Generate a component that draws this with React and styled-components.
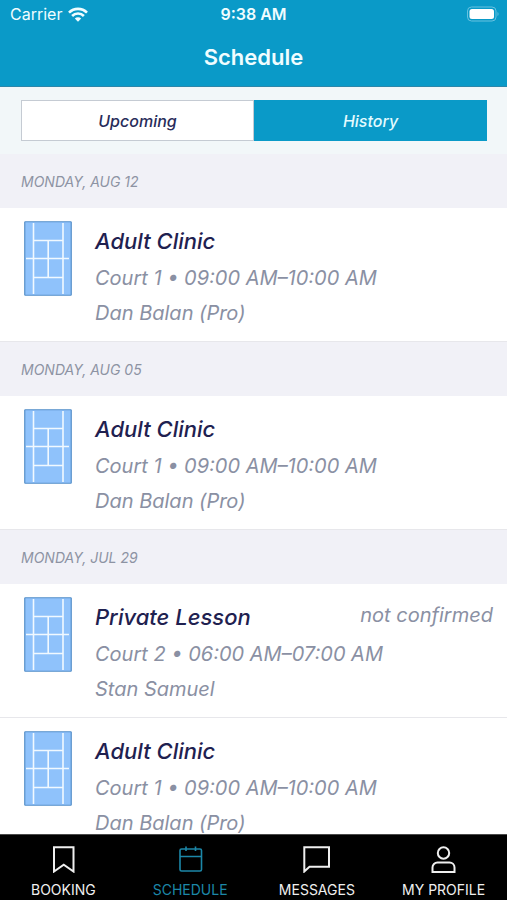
import React, { useState } from "react";
import styled, { createGlobalStyle } from "styled-components";

const GlobalStyle = createGlobalStyle`
  * { box-sizing: border-box; }
  body { margin: 0; background: #fff; }
  button { font: inherit; border: 0; margin: 0; padding: 0; cursor: pointer; }
`;

const ui = `Inter, "Liberation Sans", sans-serif`;

const Screen = styled.div`
  display: flex;
  flex-direction: column;
  height: 100vh;
  overflow: hidden;
  font-family: ${ui};
`;

const Header = styled.header`
  flex: none;
  background: #0a9ac8;
  border-bottom: 1px solid #2c87aa;
  color: #f0fdff;
`;

const StatusBar = styled.div`
  display: grid;
  grid-template-columns: 1fr auto 1fr;
  align-items: center;
  height: 28px;
  padding: 0 8px;
  font-size: 16px;
  line-height: 28px;
`;

const Carrier = styled.div`
  display: flex;
  align-items: center;
  gap: 6px;
  padding-left: 2px;
`;

const Clock = styled.div`
  font-weight: 600;
`;

const BatteryIcon = styled.svg`
  justify-self: end;
`;

const Title = styled.h1`
  margin: 0;
  height: 58px;
  font-size: 22px;
  font-weight: 600;
  line-height: 58px;
  text-align: center;
`;

const Segments = styled.div`
  flex: none;
  display: grid;
  grid-template-columns: 1fr 1fr;
  padding: 13px 20px 13px 21px;
  background: #f2f7f9;
`;

const Segment = styled.button`
  && {
    height: 41px;
    border: ${(p) => (p.$active ? "0" : "1px solid #c5cbd3")};
    background: ${(p) => (p.$active ? "#0a9ac8" : "#fff")};
    color: ${(p) => (p.$active ? "#e4fbff" : "#282c5a")};
    font-size: 16px;
    font-style: italic;
    font-weight: 500;
  }
`;

const List = styled.main`
  flex: 1;
  min-height: 0;
  overflow-y: auto;
  scrollbar-width: none;
  font-style: italic;
`;

const DayHeading = styled.h2`
  margin: 0;
  padding: 2px 21px 0;
  background: #f1f1f7;
  color: #8d93a3;
  font-size: 14px;
  font-weight: 400;
  line-height: 52px;
`;

const Entry = styled.article`
  display: flex;
  align-items: flex-start;
  gap: 23px;
  height: 134px;
  padding: 13px 14px 0 24px;
  border-bottom: 1px solid #e7e7eb;
  background: #fff;
`;

const Details = styled.div`
  flex: 1;
  padding-top: 1px;
  color: #8a90a3;
  font-size: 20px;
  line-height: 35px;
  white-space: nowrap;
`;

const TopLine = styled.div`
  display: flex;
  justify-content: space-between;
  line-height: 39px;
`;

const EntryName = styled.h3`
  margin: 0;
  color: #1f2150;
  font-size: 22px;
  font-weight: 500;
`;

const Note = styled.span`
  line-height: 35px;
`;

const Line = styled.p`
  margin: 0;
`;

const TabBar = styled.nav`
  flex: none;
  display: flex;
  height: 66px;
  border-top: 1px solid #4a4a4a;
  background: #000;
`;

const Tab = styled.button`
  && {
    flex: 1 1 0;
    min-width: 0;
    display: flex;
    flex-direction: column;
    align-items: center;
    gap: 8px;
    padding-top: 11px;
    background: none;
    color: ${(p) => (p.$active ? "#1c87a8" : "#efefef")};
    font-size: 14px;
    font-weight: 400;
    line-height: 18px;
  }
`;

const Court = () => (
  <svg width="48" height="75" viewBox="0 0 48 75" fill="none" aria-hidden="true">
    <rect x="0.75" y="0.75" width="46.5" height="73.5" rx="0.5" fill="#8fc2fb" stroke="#5790c9" strokeWidth="1.2" />
    <path d="M9.5 2v71M39 2v71M9.5 19.5H39M9.5 56.5H39M24.2 19.5v37M2 37.5h43" stroke="#f1f9ff" strokeWidth="1.6" />
  </svg>
);

const Wifi = () => (
  <svg width="20" height="15" viewBox="0 0 20 15" fill="none" aria-hidden="true">
    <path d="M1 5.6a12.7 12.7 0 0 1 18 0M4.1 9a8.3 8.3 0 0 1 11.8 0" stroke="#f0fdff" strokeWidth="2.6" />
    <path d="M6.8 11.6a4.5 4.5 0 0 1 6.4 0L10 14.8Z" fill="#f0fdff" />
  </svg>
);

const Battery = () => (
  <BatteryIcon width="32" height="16" viewBox="0 0 32 16" fill="none" role="img" aria-label="Battery full">
    <rect x="0.5" y="1" width="28.5" height="14" rx="4" stroke="#67c2e0" />
    <rect x="2.5" y="3" width="24.5" height="10" rx="2.5" fill="#fff" />
    <path d="M30.5 6v4c1.4-.6 1.4-3.4 0-4Z" fill="#67c2e0" />
  </BatteryIcon>
);

const icons = {
  booking: <path d="M4 1.2h19.5v24.3l-9.75-6.7L4 25.5Z" />,
  schedule: (
    <>
      <rect x="3" y="3" width="21.5" height="22" rx="1.5" />
      <path d="M3 10.5h21.5M9 0.5v4.5M18.5 0.5v4.5" />
    </>
  ),
  messages: <path d="M1.3 1.3h24.7v19.5H6.5L1.3 25.5Z" />,
  profile: (
    <>
      <circle cx="13.5" cy="7" r="5.7" />
      <path d="M2.5 26v-4.5a5 5 0 0 1 5-5h12a5 5 0 0 1 5 5V26Z" />
    </>
  ),
};

const TabIcon = ({ name }) => (
  <svg width="27" height="27" viewBox="0 0 27 27" fill="none" stroke="currentColor" strokeWidth={name === "schedule" ? 1.6 : 2} aria-hidden="true">
    {icons[name]}
  </svg>
);

const days = [
  { date: "MONDAY, AUG 12", entries: [{ name: "Adult Clinic", when: "Court 1 • 09:00 AM–10:00 AM", pro: "Dan Balan (Pro)" }] },
  { date: "MONDAY, AUG 05", entries: [{ name: "Adult Clinic", when: "Court 1 • 09:00 AM–10:00 AM", pro: "Dan Balan (Pro)" }] },
  {
    date: "MONDAY, JUL 29",
    entries: [
      { name: "Private Lesson", when: "Court 2 • 06:00 AM–07:00 AM", pro: "Stan Samuel", note: "not confirmed" },
      { name: "Adult Clinic", when: "Court 1 • 09:00 AM–10:00 AM", pro: "Dan Balan (Pro)" },
    ],
  },
];

const tabs = [
  ["booking", "BOOKING"],
  ["schedule", "SCHEDULE"],
  ["messages", "MESSAGES"],
  ["profile", "MY PROFILE"],
];

export default function App() {
  const [segment, setSegment] = useState("History");
  const [tab, setTab] = useState("schedule");
  return (
    <Screen>
      <GlobalStyle />
      <Header>
        <StatusBar>
          <Carrier>Carrier <Wifi /></Carrier>
          <Clock>9:38 AM</Clock>
          <Battery />
        </StatusBar>
        <Title>Schedule</Title>
      </Header>
      <Segments>
        {["Upcoming", "History"].map((s) => (
          <Segment key={s} type="button" $active={s === segment} aria-pressed={s === segment} onClick={() => setSegment(s)}>
            {s}
          </Segment>
        ))}
      </Segments>
      <List>
        {days.map((day) => (
          <section key={day.date}>
            <DayHeading>{day.date}</DayHeading>
            {day.entries.map((e) => (
              <Entry key={e.name}>
                <Court />
                <Details>
                  <TopLine>
                    <EntryName>{e.name}</EntryName>
                    {e.note && <Note>{e.note}</Note>}
                  </TopLine>
                  <Line>{e.when}</Line>
                  <Line>{e.pro}</Line>
                </Details>
              </Entry>
            ))}
          </section>
        ))}
      </List>
      <TabBar>
        {tabs.map(([id, label]) => (
          <Tab key={id} type="button" $active={id === tab} onClick={() => setTab(id)}>
            <TabIcon name={id} />
            {label}
          </Tab>
        ))}
      </TabBar>
    </Screen>
  );
}
